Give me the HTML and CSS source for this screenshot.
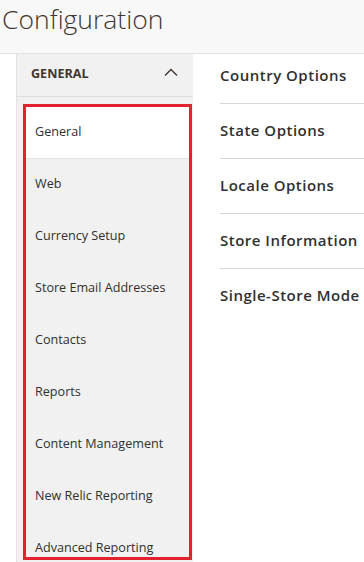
FILE: index.html
```html
<!DOCTYPE html>
<html lang="en">

<head>
  <meta charset="UTF-8">
  <title>Configuration</title>
  <link rel="stylesheet" href="styles.css">
</head>

<body>
  <header class="page-header">
    <h1 class="page-title">Configuration</h1>
  </header>

  <div class="page-main">
    <aside class="config-nav">
      <div class="nav-title">
        <span>General</span>
        <svg class="chevron" width="14" height="8" viewBox="0 0 14 8">
          <polyline points="1,7.5 7,1.5 13,7.5" fill="none" stroke="#41362f" stroke-width="1.4" />
        </svg>
      </div>
      <ul class="nav-list">
        <li class="nav-item active">General</li>
        <li class="nav-item">Web</li>
        <li class="nav-item">Currency Setup</li>
        <li class="nav-item">Store Email Addresses</li>
        <li class="nav-item">Contacts</li>
        <li class="nav-item">Reports</li>
        <li class="nav-item">Content Management</li>
        <li class="nav-item">New Relic Reporting</li>
        <li class="nav-item">Advanced Reporting</li>
      </ul>
    </aside>

    <main class="config-content">
      <div class="section">Country Options</div>
      <div class="section">State Options</div>
      <div class="section">Locale Options</div>
      <div class="section">Store Information</div>
      <div class="section">Single-Store Mode</div>
    </main>
  </div>
</body>

</html>
```

FILE: styles.css
```css
body {
  margin: 0;
  font-family: 'Open Sans', 'Liberation Sans', sans-serif;
  color: #303030;
  background-color: #fff;
  overflow: hidden;
}

.page-header {
  height: 53px;
  background-color: #f8f8f8;
  border-bottom: 1px solid #e3e3e3;
}

.page-title {
  margin: 0;
  padding-left: 2px;
  font-size: 26.5px;
  font-weight: 300;
  line-height: 38px;
  color: #41362f;
}

.page-main {
  display: flex;
  align-items: flex-start;
}

/* left column */
.config-nav {
  width: 176px;
  height: 520px;
  margin-left: 16px;
  background-color: #f1f1f1;
  border-left: 1px solid #e3e3e3;
}

.nav-title {
  display: flex;
  align-items: center;
  justify-content: space-between;
  box-sizing: border-box;
  height: 43px;
  padding: 0 15px 4px 14px;
  border-bottom: 1px solid #dedede;
  font-size: 12.6px;
  font-weight: 700;
  text-transform: uppercase;
  color: #41362f;
}

.chevron {
  margin-top: -3px;
}

.nav-list {
  list-style: none;
  margin: 7px 1px 0 6px;
  padding: 0;
  height: 450px;
  overflow: hidden;
  border: 3px solid #e2232d;
}

.nav-item {
  height: 47px;
  padding: 1px 0 4px 9px;
  font-size: 12.6px;
  line-height: 47px;
  color: #303030;
}

.nav-item.active {
  height: 46px;
  background-color: #fff;
  border-bottom: 1px solid #e3e3e3;
}

/* right column */
.config-content {
  flex: 1;
  padding-left: 27px;
}

.section {
  padding: 16px 0 18px;
  line-height: 20px;
  font-size: 15px;
  font-weight: 600;
  letter-spacing: 0.5px;
  white-space: nowrap;
  color: #303030;
  border-bottom: 1px solid #d6d6d6;
}

.section:first-child {
  padding-top: 11px;
}

.section:last-child {
  border-bottom: none;
}
```
